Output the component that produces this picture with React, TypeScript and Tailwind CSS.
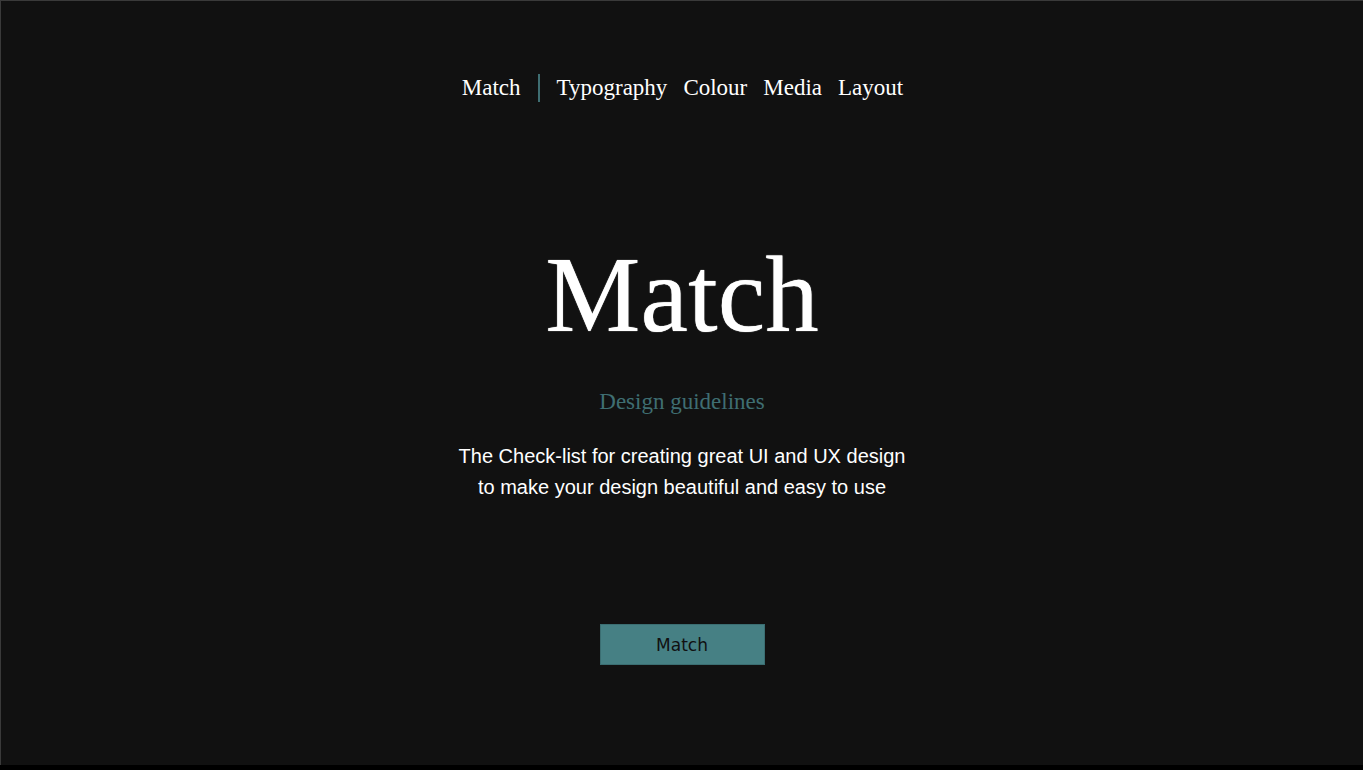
import React from "react";

const navItems = ["Typography", "Colour", "Media", "Layout"];

export default function App() {
  return (
    <div className="w-[1363px] h-[770px] bg-black overflow-hidden">
      <div className="h-[765px] bg-[#111111] border-t border-l border-[#3a3a3a] flex flex-col items-center">
        {/* nav */}
        <nav className="mt-[70px] ml-[1px] flex items-center text-white text-[23px] font-['Liberation_Serif',serif]">
          <a>Match</a>
          <span className="mx-[17px] w-[2px] h-[28px] bg-[#3f6e72]" />
          <div className="flex gap-[16px]">
            {navItems.map((item) => (
              <a key={item}>{item}</a>
            ))}
          </div>
        </nav>

        {/* hero */}
        <h1 className="mt-[136px] text-white text-[107px] leading-none font-['Liberation_Serif',serif] [text-shadow:0_0_1px_#ffffff]">
          Match
        </h1>
        <p className="mt-[36px] text-[#3f6e72] text-[23px] font-['Liberation_Serif',serif]">
          Design guidelines
        </p>
        <p className="mt-[22px] text-white text-[20px] leading-[31px] text-center font-['Liberation_Sans',Arial,sans-serif]">
          The Check-list for creating great UI and UX design
          <br />
          to make your design beautiful and easy to use
        </p>

        <button className="mt-[121px] w-[165px] h-[41px] pt-[3px] bg-[#468084] border border-[#3b6e72] text-[#111111] text-[17px] font-['DejaVu_Sans',sans-serif]">
          Match
        </button>
      </div>
    </div>
  );
}
